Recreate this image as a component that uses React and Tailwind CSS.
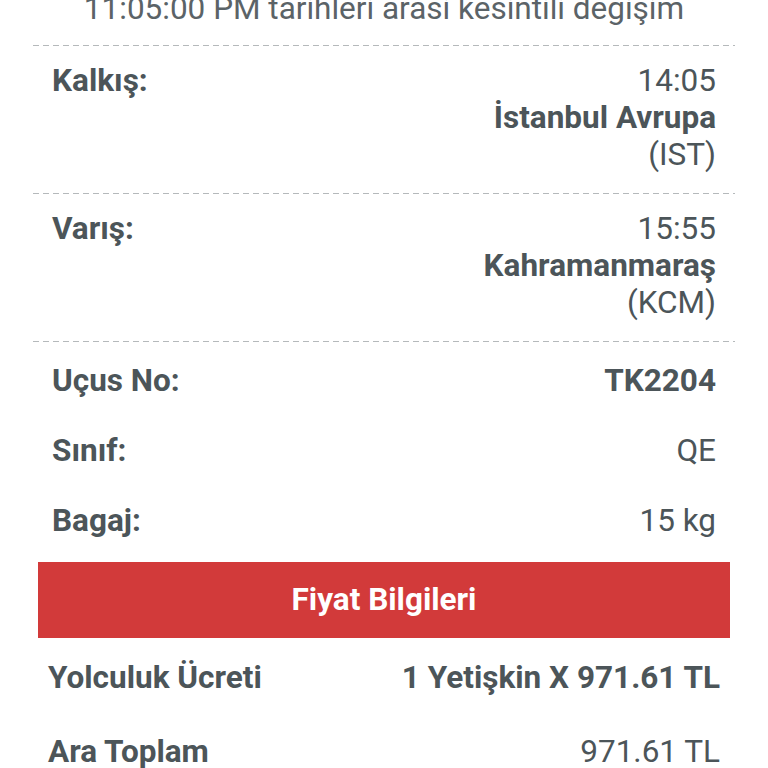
import React from 'react';

const dash = 'h-px mx-[33px] bg-[linear-gradient(to_right,#b5b9bb_60%,transparent_0)] bg-[length:10px_1px]';

function Divider() {
  return <div className={dash} />;
}

function StopRow({ label, time, city, code }) {
  return (
    <div className="flex justify-between px-[52px] pt-[16px] pb-[20px] leading-[37px]">
      <div className="font-bold">{label}</div>
      <div className="flex flex-col items-end">
        <span>{time}</span>
        <span className="font-bold">{city}</span>
        <span>{code}</span>
      </div>
    </div>
  );
}

function InfoRow({ label, value, bold }) {
  return (
    <div className="flex justify-between leading-[37px]">
      <span className="font-bold">{label}</span>
      <span className={bold ? 'font-bold' : ''}>{value}</span>
    </div>
  );
}

export default function App() {
  return (
    <div className="w-full h-[768px] overflow-hidden bg-white text-[#4c5559] text-[31.5px] font-['Roboto',sans-serif]">
      <div className="-mt-[10px] pb-[18px] text-center leading-[37px] text-[#5b6367] whitespace-nowrap">
        11:05:00 PM tarihleri arasi kesintili degişim
      </div>
      <Divider />
      <StopRow label="Kalkış:" time="14:05" city="İstanbul Avrupa" code="(IST)" />
      <Divider />
      <StopRow label="Varış:" time="15:55" city="Kahramanmaraş" code="(KCM)" />
      <Divider />
      <div className="flex flex-col gap-[33px] px-[52px] pt-[20px] pb-[23px]">
        <InfoRow label="Uçus No:" value="TK2204" bold />
        <InfoRow label="Sınıf:" value="QE" />
        <InfoRow label="Bagaj:" value="15 kg" />
      </div>
      <div className="mx-[38px] h-[76px] bg-[#d23a3a] flex items-center justify-center text-white font-bold">
        Fiyat Bilgileri
      </div>
      <div className="flex flex-col gap-[37px] px-[48px] pt-[21px]">
        <InfoRow label="Yolculuk Ücreti" value="1 Yetişkin X 971.61 TL" bold />
        <InfoRow label="Ara Toplam" value="971.61 TL" />
      </div>
    </div>
  );
}
